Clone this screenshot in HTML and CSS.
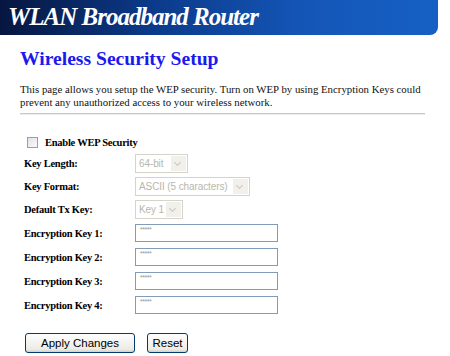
FILE: index.html
```html
<!DOCTYPE html>
<html lang="en">
<head>
    <meta charset="UTF-8" />
    <title>Wireless Security Setup</title>
    <link rel="stylesheet" href="styles.css">
</head>
<body>
<header class="banner">
    <span class="banner-title">WLAN Broadband Router</span>
</header>

<main class="page">
    <h1>Wireless Security Setup</h1>
    <p class="intro">This page allows you setup the WEP security. Turn on WEP by using Encryption Keys could prevent any unauthorized access to your wireless network.</p>
    <hr class="divider">

    <form class="wep-form">
        <label class="enable-row">
            <span class="check"></span>
            <span>Enable WEP Security</span>
        </label>

        <div class="field">
            <span class="label">Key Length:</span>
            <span class="select w-len">64-bit<span class="arrow"></span></span>
        </div>
        <div class="field">
            <span class="label">Key Format:</span>
            <span class="select w-fmt">ASCII (5 characters)<span class="arrow"></span></span>
        </div>
        <div class="field">
            <span class="label">Default Tx Key:</span>
            <span class="select w-key">Key 1<span class="arrow"></span></span>
        </div>
        <div class="field field-key">
            <span class="label">Encryption Key 1:</span>
            <span class="text-input">*****</span>
        </div>
        <div class="field field-key">
            <span class="label">Encryption Key 2:</span>
            <span class="text-input">*****</span>
        </div>
        <div class="field field-key">
            <span class="label">Encryption Key 3:</span>
            <span class="text-input">*****</span>
        </div>
        <div class="field field-key">
            <span class="label">Encryption Key 4:</span>
            <span class="text-input">*****</span>
        </div>

        <div class="buttons">
            <button type="button" class="btn btn-apply">Apply Changes</button>
            <button type="button" class="btn btn-reset">Reset</button>
        </div>
    </form>
</main>
</body>
</html>
```

FILE: styles.css
```css
* {
    box-sizing: border-box;
}
body {
    margin: 0;
    background: #fff;
    font-family: "Liberation Serif", serif;
    color: #000;
}
.banner {
    width: 438px;
    height: 35px;
    background: linear-gradient(90deg, #06163f 0%, #0c3a8a 35%, #1456b8 70%, #1660c4 100%);
    border-bottom-right-radius: 8px;
    padding: 3px 0 0 8px;
}
.banner-title {
    color: #fff;
    font-size: 25px;
    font-weight: bold;
    font-style: italic;
    line-height: 28px;
    letter-spacing: -1px;
}
.page {
    padding: 0 0 0 20px;
}
h1 {
    margin: 12px 0 0;
    color: #1a1aee;
    font-size: 19.6px;
    line-height: 24px;
}
.intro {
    margin: 12px 0 0;
    width: 410px;
    font-size: 10.8px;
    line-height: 13px;
    color: #111;
}
.divider {
    margin: 4px 0 0;
    width: 405px;
    border: 0;
    border-top: 1px solid #c8c8c8;
    border-bottom: 1px solid #ececec;
}
.wep-form {
    margin-top: 19px;
    padding-left: 4px;
    font-size: 10.5px;
    font-weight: bold;
    letter-spacing: -0.25px;
}
.enable-row {
    display: flex;
    align-items: center;
    gap: 7px;
    height: 16px;
    margin-bottom: 2px;
    padding-left: 3px;
}
.check {
    width: 11px;
    height: 11px;
    border: 1px solid #8aa0bc;
    background: linear-gradient(135deg, #dfe3ea, #fafafa);
}
.field {
    display: flex;
    align-items: center;
    height: 23px;
}
.field-key {
    height: 24px;
}
.label {
    width: 111px;
}
.select {
    position: relative;
    height: 19px;
    border: 1px solid #d6d3c8;
    font-family: "Liberation Sans", sans-serif;
    font-weight: normal;
    font-size: 10px;
    letter-spacing: -0.1px;
    color: #b9b6ac;
    line-height: 17px;
    padding-left: 3px;
    background: #fff;
    white-space: nowrap;
    overflow: hidden;
}
.w-len { width: 53px; }
.w-fmt { width: 115px; }
.w-key { width: 48px; }
.arrow {
    position: absolute;
    right: 1px;
    top: 1px;
    width: 15px;
    height: 15px;
    background: #f1f0ea;
}
.arrow::after {
    content: "";
    position: absolute;
    left: 4px;
    top: 4px;
    width: 4px;
    height: 4px;
    border-right: 1.5px solid #c9c7bd;
    border-bottom: 1.5px solid #c9c7bd;
    transform: rotate(45deg);
}
.text-input {
    width: 143px;
    height: 18px;
    border: 1px solid #7f9db9;
    font-family: "Liberation Sans", sans-serif;
    font-weight: normal;
    font-size: 7px;
    color: #999;
    line-height: 10px;
    padding-left: 4px;
    letter-spacing: -0.5px;
}
.buttons {
    display: flex;
    gap: 12px;
    margin-top: 16px;
    padding-left: 1px;
    letter-spacing: 0;
}
.btn {
    height: 20px;
    font-family: "Liberation Sans", sans-serif;
    font-size: 11.5px;
    color: #000;
    background: linear-gradient(#fefefe, #ecebe6 85%, #d6d0c5);
    border: 1px solid #003c74;
    border-radius: 3px;
    padding: 0;
}
.btn-apply { width: 110px; }
.btn-reset { width: 41px; }
```
